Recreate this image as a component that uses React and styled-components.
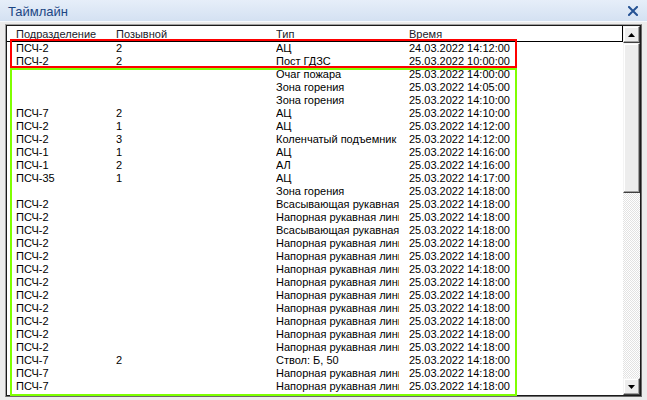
import React from "react";
import styled, { createGlobalStyle } from "styled-components";

const Global = createGlobalStyle`
  html, body { margin: 0; padding: 0; background: #ececec; }
  body { font-family: "Liberation Sans", Arial, sans-serif; }
`;

const Window = styled.div`
  width: 647px;
  height: 400px;
  display: flex;
  flex-direction: column;
  background: #ececec;
  overflow: hidden;
`;

const TitleBar = styled.div`
  height: 22px;
  flex: none;
  display: flex;
  align-items: center;
  justify-content: space-between;
  padding: 0 9px 0 8px;
  background: linear-gradient(#e6eef9, #d4e1f2);
  border-bottom: 1px solid #f6f9fd;
  box-sizing: border-box;
`;

const Title = styled.span`
  font-size: 13px;
  color: #1c4684;
  padding-top: 1px;
`;

const Body = styled.div`
  position: relative;
  flex: 1;
  display: flex;
  padding: 2px 5px 3px 5px;
  min-height: 0;
`;

const ListOuter = styled.div`
  flex: 1;
  display: flex;
  border: 1px solid #a0a0a0;
  border-right-color: #6a6a6a;
  border-bottom-color: #6a6a6a;
`;

const ListInner = styled.div`
  flex: 1;
  display: flex;
  border: 1px solid #1a1a1a;
  background: #fff;
  min-width: 0;
`;

const Content = styled.div`
  flex: 1;
  min-width: 0;
  overflow: hidden;
  font-size: 11px;
  color: #000;
`;

const Header = styled.div`
  display: flex;
  height: 13px;
  padding: 2px 0 0 9px;
  line-height: 13px;
  border-bottom: 1px solid #000;
  border-right: 1px solid #000;
  overflow: hidden;
  color: #1a1a2a;
`;

const Row = styled.div`
  display: flex;
  height: 13px;
  line-height: 13px;
  padding-left: 9px;
  white-space: nowrap;
`;

const Cell = styled.div`
  flex: none;
  width: ${(p) => p.$w}px;
  margin-right: ${(p) => p.$gap || 0}px;
  overflow: hidden;
  white-space: nowrap;
`;

const Scrollbar = styled.div`
  width: 17px;
  flex: none;
  display: flex;
  flex-direction: column;
  background-color: #fff;
  background-image: repeating-conic-gradient(#e2e2e2 0 25%, #ffffff 0 50%);
  background-size: 2px 2px;
`;

const ArrowButton = styled.div`
  height: 17px;
  flex: none;
  box-sizing: border-box;
  display: flex;
  align-items: center;
  justify-content: center;
  background: #ededed;
  border: 1px solid #f4f4f4;
  border-right-color: #404040;
  border-bottom-color: #404040;
  box-shadow: inset -1px -1px 0 #a0a0a0, inset 1px 1px 0 #ffffff;
`;

const Thumb = styled.div`
  height: 150px;
  flex: none;
  box-sizing: border-box;
  background: #ededed;
  border: 1px solid #f4f4f4;
  border-right-color: #404040;
  border-bottom-color: #404040;
  box-shadow: inset -1px -1px 0 #a0a0a0, inset 1px 1px 0 #ffffff;
`;

const Track = styled.div`
  flex: 1;
`;

const Highlight = styled.div`
  position: absolute;
  left: 10px;
  width: 507px;
  box-sizing: border-box;
  border: 2px solid ${(p) => p.$color};
  top: ${(p) => p.$top}px;
  height: ${(p) => p.$h}px;
  pointer-events: none;
`;

const CloseIcon = () => (
  <svg width="10" height="10" viewBox="0 0 10 10">
    <path d="M1 1 L9 9 M9 1 L1 9" stroke="#255294" strokeWidth="2" strokeLinecap="square" />
  </svg>
);

const Arrow = ({ down }) => (
  <svg width="7" height="4" viewBox="0 0 7 4">
    <path d={down ? "M0 0 H7 L3.5 4 Z" : "M0 4 H7 L3.5 0 Z"} fill="#000" />
  </svg>
);

const rows = [
  ["ПСЧ-2", "2", "АЦ", "24.03.2022 14:12:00"],
  ["ПСЧ-2", "2", "Пост ГДЗС", "25.03.2022 10:00:00"],
  ["", "", "Очаг пожара", "25.03.2022 14:00:00"],
  ["", "", "Зона горения", "25.03.2022 14:05:00"],
  ["", "", "Зона горения", "25.03.2022 14:10:00"],
  ["ПСЧ-7", "2", "АЦ", "25.03.2022 14:10:00"],
  ["ПСЧ-2", "1", "АЦ", "25.03.2022 14:12:00"],
  ["ПСЧ-2", "3", "Коленчатый подъемник", "25.03.2022 14:12:00"],
  ["ПСЧ-1", "1", "АЦ", "25.03.2022 14:16:00"],
  ["ПСЧ-1", "2", "АЛ", "25.03.2022 14:16:00"],
  ["ПСЧ-35", "1", "АЦ", "25.03.2022 14:17:00"],
  ["", "", "Зона горения", "25.03.2022 14:18:00"],
  ["ПСЧ-2", "", "Всасывающая рукавная линия", "25.03.2022 14:18:00"],
  ["ПСЧ-2", "", "Напорная рукавная линия", "25.03.2022 14:18:00"],
  ["ПСЧ-2", "", "Всасывающая рукавная линия", "25.03.2022 14:18:00"],
  ...Array.from({ length: 9 }, () => ["ПСЧ-2", "", "Напорная рукавная линия", "25.03.2022 14:18:00"]),
  ["ПСЧ-7", "2", "Ствол: Б, 50", "25.03.2022 14:18:00"],
  ["ПСЧ-7", "", "Напорная рукавная линия", "25.03.2022 14:18:00"],
  ["ПСЧ-7", "", "Напорная рукавная линия", "25.03.2022 14:18:00"],
];

const cols = [
  { w: 100 },
  { w: 160 },
  { w: 123, gap: 10 },
  { w: 200 },
];

export default function App() {
  return (
    <>
      <Global />
      <Window>
        <TitleBar>
          <Title>Таймлайн</Title>
          <CloseIcon />
        </TitleBar>
        <Body>
          <ListOuter>
            <ListInner>
              <Content>
                <Header>
                  {["Подразделение", "Позывной", "Тип", "Время"].map((h, i) => (
                    <Cell key={h} $w={cols[i].w} $gap={cols[i].gap}>{h}</Cell>
                  ))}
                </Header>
                {rows.map((r, ri) => (
                  <Row key={ri}>
                    {r.map((c, ci) => (
                      <Cell key={ci} $w={cols[ci].w} $gap={cols[ci].gap}>{c}</Cell>
                    ))}
                  </Row>
                ))}
              </Content>
              <Scrollbar>
                <ArrowButton><Arrow /></ArrowButton>
                <Thumb />
                <Track />
                <ArrowButton><Arrow down /></ArrowButton>
              </Scrollbar>
            </ListInner>
          </ListOuter>
          <Highlight $color="#ff0000" $top={17} $h={29} />
          <Highlight $color="#7fff00" $top={46} $h={328} />
        </Body>
      </Window>
    </>
  );
}
